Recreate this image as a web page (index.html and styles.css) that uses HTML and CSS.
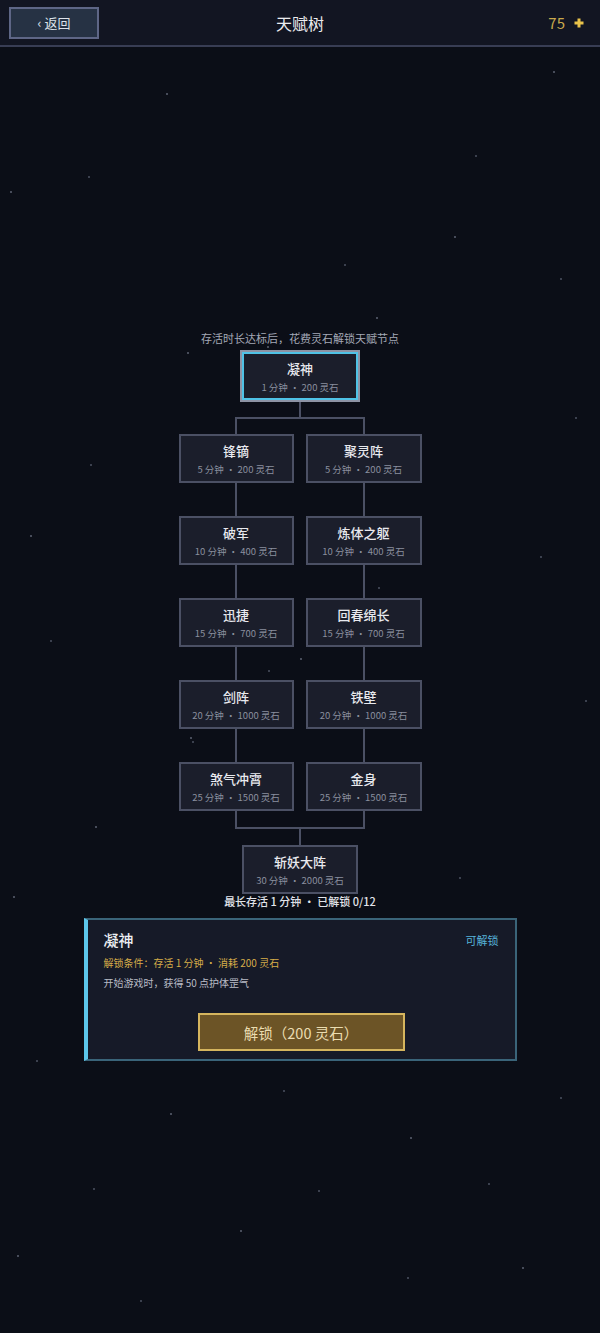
FILE: index.html
```html
<!DOCTYPE html>
<html>
<head>
	<meta charset="utf-8">
	<title>天赋树</title>
<link rel="stylesheet" href="styles.css">
</head>
<body>
	<div class="stars"></div>

	<header class="topbar">
		<div class="left">
			<a href="#" class="back">‹ 返回</a>
		</div>
		<h1 class="title">天赋树</h1>
		<div class="coins">
			<span>75</span>
			<svg width="10" height="10" viewBox="0 0 10 10"><path d="M3.5 0.5h3v3h3v3h-3v3h-3v-3h-3v-3h3z" fill="#e8c24a"/></svg>
		</div>
	</header>

	<main class="talents">
		<p class="hint">存活时长达标后，花费灵石解锁天赋节点</p>

		<div class="tree">
			<div class="node node-root selected">
				<div class="name">凝神</div>
				<div class="cost">1 分钟 · 200 灵石</div>
			</div>

			<div class="split">
				<div class="stem"></div>
				<div class="bar"></div>
			</div>

			<div class="pair">
				<div class="node"><div class="name">锋镝</div><div class="cost">5 分钟 · 200 灵石</div></div>
				<div class="node"><div class="name">聚灵阵</div><div class="cost">5 分钟 · 200 灵石</div></div>
			</div>
			<div class="links"><i></i><i></i></div>

			<div class="pair">
				<div class="node"><div class="name">破军</div><div class="cost">10 分钟 · 400 灵石</div></div>
				<div class="node"><div class="name">炼体之躯</div><div class="cost">10 分钟 · 400 灵石</div></div>
			</div>
			<div class="links"><i></i><i></i></div>

			<div class="pair">
				<div class="node"><div class="name">迅捷</div><div class="cost">15 分钟 · 700 灵石</div></div>
				<div class="node"><div class="name">回春绵长</div><div class="cost">15 分钟 · 700 灵石</div></div>
			</div>
			<div class="links"><i></i><i></i></div>

			<div class="pair">
				<div class="node"><div class="name">剑阵</div><div class="cost">20 分钟 · 1000 灵石</div></div>
				<div class="node"><div class="name">铁壁</div><div class="cost">20 分钟 · 1000 灵石</div></div>
			</div>
			<div class="links"><i></i><i></i></div>

			<div class="pair">
				<div class="node"><div class="name">煞气冲霄</div><div class="cost">25 分钟 · 1500 灵石</div></div>
				<div class="node"><div class="name">金身</div><div class="cost">25 分钟 · 1500 灵石</div></div>
			</div>

			<div class="merge">
				<div class="bar"></div>
				<div class="stem"></div>
			</div>

			<div class="node node-final">
				<div class="name">斩妖大阵</div>
				<div class="cost">30 分钟 · 2000 灵石</div>
			</div>
		</div>

		<p class="status">最长存活 1 分钟 · 已解锁 0/12</p>

		<section class="detail">
			<div class="detail-head">
				<h2>凝神</h2>
				<span class="state">可解锁</span>
			</div>
			<p class="cond">解锁条件：存活 1 分钟 · 消耗 200 灵石</p>
			<p class="desc">开始游戏时，获得 50 点护体罡气</p>
			<button class="unlock">解锁（200 灵石）</button>
		</section>
	</main>
</body>
</html>
```

FILE: styles.css
```css
body {
  margin: 0;
  min-height: 1333px;
  background-color: #0b0e17;
  color: #e4e6ec;
  font-family: "Noto Sans CJK SC", "Noto Sans", sans-serif;
  position: relative;
}

/* star field, one dot with many shadows */
.stars {
  position: absolute;
  top: 0;
  left: 0;
  width: 2px;
  height: 2px;
  border-radius: 50%;
  background: transparent;
  box-shadow:
    553px 71px #5c6272, 166px 93px #5c6272, 88px 176px #4c5262, 10px 191px #5c6272,
    475px 155px #4c5262, 454px 236px #5c6272, 344px 264px #4c5262, 376px 317px #5c6272,
    298px 332px #4c5262, 267px 346px #5c6272, 187px 352px #5c6272, 560px 278px #4c5262,
    90px 464px #4c5262, 30px 535px #5c6272, 575px 417px #4c5262, 540px 556px #4c5262,
    378px 587px #4c5262, 300px 658px #5c6272, 268px 670px #4c5262, 190px 737px #5c6272,
    192px 741px #4c5262, 95px 826px #5c6272, 459px 877px #4c5262, 13px 896px #5c6272,
    560px 1097px #4c5262, 170px 1113px #5c6272, 93px 1188px #4c5262, 283px 1090px #4c5262,
    410px 1137px #5c6272, 488px 1183px #4c5262, 17px 1255px #5c6272, 407px 1277px #4c5262,
    318px 1190px #4c5262, 522px 1267px #5c6272, 50px 640px #4c5262, 585px 700px #4c5262,
    140px 1300px #4c5262, 470px 990px #4c5262, 36px 1060px #4c5262, 240px 1230px #5c6272;
}

.topbar {
  display: grid;
  grid-template-columns: 1fr auto 1fr;
  align-items: center;
  height: 45px;
  padding: 0 9px;
  background-color: #121522;
  border-bottom: 2px solid #383d54;
  position: relative;
}

.back {
  display: flex;
  align-items: center;
  justify-content: center;
  box-sizing: border-box;
  width: 90px;
  height: 32px;
  background-color: #263244;
  border: 2px solid #5e6686;
  color: #dde2ea;
  font-size: 13px;
  text-decoration: none;
}

.title {
  margin: 0;
  font-size: 16px;
  font-weight: 400;
  color: #ececef;
}

.coins {
  display: flex;
  align-items: center;
  justify-content: flex-end;
  gap: 9px;
  padding-right: 7px;
  color: #c9a94c;
  font-size: 15px;
}

.talents {
  padding-top: 283px;
  position: relative;
}

.hint {
  margin: 0 0 4px;
  text-align: center;
  font-size: 11px;
  line-height: 16px;
  color: #a4a9b6;
}

.tree {
  width: 243px;
  margin: 0 auto;
  display: flex;
  flex-direction: column;
  align-items: center;
}

.node {
  box-sizing: border-box;
  height: 49px;
  padding-top: 6px;
  background-color: #1b1e2b;
  border: 2px solid #4b5064;
  text-align: center;
}

.node .name {
  font-size: 13px;
  line-height: 18px;
  font-weight: 500;
  color: #e8e9ee;
}

.node .cost {
  margin-top: 3px;
  font-size: 9.5px;
  line-height: 13px;
  color: #8a8f9e;
}

.node-root {
  width: 120px;
  height: 52px;
  padding-top: 8px;
  border-color: #8d93a4;
}

.node-root.selected {
  box-shadow: inset 0 0 0 2px #4fc2e6;
}

.node-final {
  width: 116px;
}

.pair,
.links {
  display: grid;
  grid-template-columns: 115px 116px;
  gap: 12px;
}

.links {
  height: 33px;
}

.links i {
  background: linear-gradient(#4b5064, #4b5064) center / 2px 100% no-repeat;
}

.split,
.merge {
  display: flex;
  flex-direction: column;
  align-items: center;
}

.stem {
  width: 2px;
  height: 15px;
  background-color: #4b5064;
}

.bar {
  box-sizing: border-box;
  width: 130px;
  height: 17px;
  border: 2px solid #4b5064;
}

.split .bar {
  border-bottom: 0;
}

.merge .bar {
  height: 18px;
  border-top: 0;
}

.merge .stem {
  height: 16px;
}

.status {
  margin: 0 0 10px;
  text-align: center;
  font-size: 11px;
  line-height: 14px;
  font-weight: 500;
  color: #e2e4ea;
}

.detail {
  box-sizing: border-box;
  width: 433px;
  margin: 0 auto;
  padding: 10px 16px 8px;
  background-color: #161a28;
  border: 2px solid #3a6479;
  border-left: 4px solid #5cc6ea;
  display: flex;
  flex-direction: column;
}

.detail-head {
  display: flex;
  justify-content: space-between;
  align-items: center;
}

.detail h2 {
  margin: 0;
  font-size: 15px;
  line-height: 20px;
  font-weight: 500;
  color: #eceef2;
}

.state {
  font-size: 11px;
  color: #56b3da;
}

.cond {
  margin: 6px 0 0;
  font-size: 10px;
  line-height: 14px;
  color: #d6ad48;
}

.desc {
  margin: 6px 0 0;
  font-size: 10px;
  line-height: 14px;
  color: #b9bcc6;
}

.unlock {
  align-self: center;
  width: 207px;
  height: 38px;
  margin-top: 23px;
  background-color: #6c5426;
  border: 2px solid #d5b55e;
  color: #eadcb0;
  font-family: inherit;
  font-size: 14.5px;
  cursor: pointer;
}
```
